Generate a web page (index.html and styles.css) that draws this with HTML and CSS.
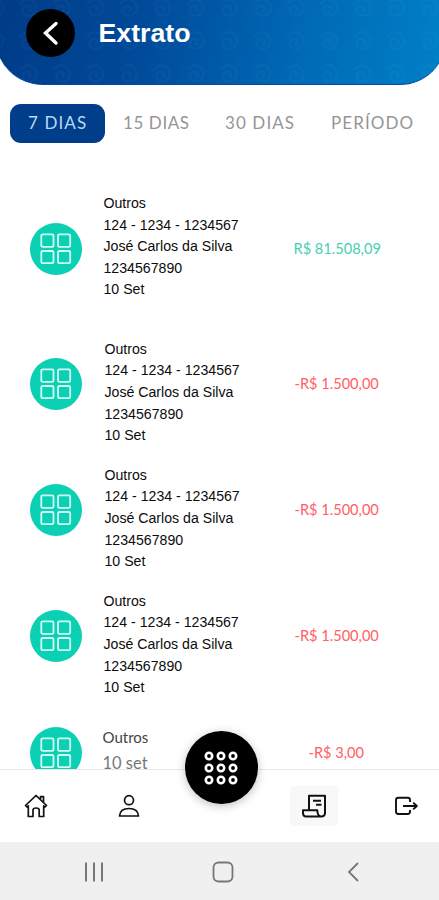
FILE: index.html
```
<!DOCTYPE html>
<html lang="pt-BR">
<head>
<meta charset="utf-8">
<title>Extrato</title>
<link rel="stylesheet" href="styles.css">
</head>
<body>
<svg class="defs" width="0" height="0" aria-hidden="true">
  <symbol id="grid" viewBox="0 0 32 32"><g fill="none" stroke="#d2fff8" stroke-width="1.8"><rect x="1.3" y="1.3" width="12.2" height="12.6" rx="1.5"/><rect x="18" y="1.3" width="12.2" height="12.6" rx="1.5"/><rect x="1.3" y="18" width="12.2" height="12.2" rx="1.5"/><rect x="18" y="18" width="12.2" height="12.2" rx="1.5"/></g></symbol>
</svg>
<div class="app">
  <header class="header">
    <svg class="pattern" width="439" height="85" aria-hidden="true">
      <defs><pattern id="swirl" width="33.4" height="33" patternUnits="userSpaceOnUse" x="14" y="-8"><path d="M6 12q8-9 15-1c5 8-3 15-9 12c-6-3-3-10 2-9c4 1 3 6 0 5" fill="none" stroke="#8ad0ff" stroke-width="2.4"/></pattern></defs>
      <rect width="439" height="85" fill="url(#swirl)" opacity=".04"/>
    </svg>
    <div class="back"><svg width="48" height="48" viewBox="0 0 48 48"><path d="M30 14.5L19.5 24L30 34" fill="none" stroke="#fff" stroke-width="3.4" stroke-linecap="round"/></svg></div>
    <h1>Extrato</h1>
  </header>
  <nav class="tabs">
    <span class="tab active">7 DIAS</span>
    <span class="tab t15">15 DIAS</span>
    <span class="tab t30">30 DIAS</span>
    <span class="tab per">PERÍODO</span>
  </nav>
  <main class="list">
    <div class="row first">
      <div class="badge"><svg width="32" height="32"><use href="#grid"/></svg></div>
      <div class="info">Outros<br>124 - 1234 - 1234567<br>José Carlos da Silva<br>1234567890<br>10 Set</div>
      <div class="amount credit">R$ 81.508,09</div>
    </div>
    <div class="row">
      <div class="badge"><svg width="32" height="32"><use href="#grid"/></svg></div>
      <div class="info inset">Outros<br>124 - 1234 - 1234567<br>José Carlos da Silva<br>1234567890<br>10 Set</div>
      <div class="amount">-R$ 1.500,00</div>
    </div>
    <div class="row">
      <div class="badge"><svg width="32" height="32"><use href="#grid"/></svg></div>
      <div class="info inset">Outros<br>124 - 1234 - 1234567<br>José Carlos da Silva<br>1234567890<br>10 Set</div>
      <div class="amount">-R$ 1.500,00</div>
    </div>
    <div class="row">
      <div class="badge"><svg width="32" height="32"><use href="#grid"/></svg></div>
      <div class="info">Outros<br>124 - 1234 - 1234567<br>José Carlos da Silva<br>1234567890<br>10 Set</div>
      <div class="amount">-R$ 1.500,00</div>
    </div>
    <div class="row last">
      <div class="badge"><svg width="32" height="32"><use href="#grid"/></svg></div>
      <div class="info brief"><div class="kind">Outros</div><div class="date">10 set</div></div>
      <div class="amount small">-R$ 3,00</div>
    </div>
  </main>
  <footer class="bar">
    <div class="item"><svg width="26" height="26" viewBox="0 0 26 26" fill="none" stroke="#111" stroke-width="1.7" stroke-linejoin="round"><path d="M2.5 12.5L13 2.5L23.5 12.5L22 14L20.7 12.8V23.5H16.2V17.2Q16.2 15 13.2 15Q10 15 10 17.2V23.5H5.3V12.8L4 14ZM17.5 6.2V3.6H20.5V9.4"/></svg></div>
    <div class="item"><svg width="26" height="26" viewBox="0 0 26 26" fill="none" stroke="#111" stroke-width="1.7"><circle cx="13" cy="7.2" r="4.5"/><path d="M3.5 23Q4 15.5 13 15.5T22.5 23Z" stroke-linejoin="round"/></svg></div>
    <div class="item"></div>
    <div class="item selected"><svg width="26" height="26" viewBox="0 0 26 26" fill="none" stroke="#111" stroke-width="2" stroke-linejoin="round"><path d="M8 16.8V2.8H24V20.3Q23.5 23.5 20.6 23.5H4.5Q2 23 2 20V17.3H16.3Q16.4 23.5 20.5 23.5M12 7.8H20M15 11.7H20.5"/></svg></div>
    <div class="item"><svg width="26" height="26" viewBox="0 0 26 26" fill="none" stroke="#111" stroke-width="1.9" stroke-linejoin="round"><path d="M17 9V7Q17 4.7 14.7 4.7H5.5Q3 4.7 3 7V18.5Q3 21 5.5 21H14.7Q17 21 17 18.5V17M10 13H23.5M20.2 9.6L23.8 13L20.2 16.4"/></svg></div>
    <div class="fab"><svg width="40" height="40" viewBox="0 0 40 40"><g fill="none" stroke="#fff" stroke-width="2.6"><circle cx="8" cy="8" r="3.2"/><circle cx="20" cy="8" r="3.2"/><circle cx="32" cy="8" r="3.2"/><circle cx="8" cy="20" r="3.2"/><circle cx="20" cy="20" r="3.2"/><circle cx="32" cy="20" r="3.2"/><circle cx="8" cy="32" r="3.2"/><circle cx="20" cy="32" r="3.2"/><circle cx="32" cy="32" r="3.2"/></g></svg></div>
  </footer>
  <div class="system">
    <svg width="20" height="22" viewBox="0 0 20 22"><path d="M2 1.5V20.5M10 1.5V20.5M18 1.5V20.5" stroke="#777" stroke-width="2"/></svg>
    <svg width="22" height="22" viewBox="0 0 22 22"><rect x="1.5" y="1.5" width="19" height="19" rx="5" fill="none" stroke="#777" stroke-width="1.8"/></svg>
    <svg width="14" height="22" viewBox="0 0 14 22"><path d="M12 2L3 11L12 20" fill="none" stroke="#777" stroke-width="1.8"/></svg>
  </div>
</div>
</body>
</html>
```
FILE: styles.css
```
* { box-sizing: border-box; }
body { margin: 0; background: #fff; }
.defs { position: absolute; }
.app { width: 439px; height: 900px; overflow: hidden; display: flex; flex-direction: column; font-family: "Liberation Sans", Arial, sans-serif; }
.header { position: relative; flex: none; width: 451px; height: 84.5px; margin-left: -5px; padding: 0 0 18px 31px; display: flex; align-items: center; overflow: hidden; border-radius: 0 0 46px 48px; border-bottom: 1px solid #0848a0; background: linear-gradient(100deg, #003b87 0%, #004a99 32%, #006bb7 70%, #0081c7 100%); }
.pattern { position: absolute; left: 5px; top: 0; }
.back { position: relative; width: 49px; height: 48px; border-radius: 50%; background: #000; }
.back svg { display: block; }
h1 { position: relative; margin: 1px 0 0 23.5px; font-size: 26.7px; line-height: 30px; color: #fff; }
.tabs { flex: none; display: flex; align-items: center; height: 39px; margin: 19px 0 0 10px; }
.tab { font-family: Lato, sans-serif; font-size: 17px; line-height: 38px; letter-spacing: 1.1px; color: #959595; white-space: nowrap; }
.active { width: 95px; height: 39px; padding-left: 18px; border-radius: 11px; background: #003d8a; color: #b8d9f4; }
.t15 { width: 102px; margin-left: 18px; letter-spacing: .6px; }
.t30 { width: 106px; }
.list { flex: none; height: 626.5px; padding-top: 33.5px; overflow: hidden; }
.row { height: 126px; display: grid; grid-template-columns: 103.5px 190px 1fr; align-items: center; }
.first { height: 145px; }
.last { height: 108px; }
.badge { width: 52px; height: 52px; margin-left: 29.5px; border-radius: 50%; background: #0bd0b3; display: flex; align-items: center; justify-content: center; }
.info { padding-top: 17.6px; font-size: 14.15px; line-height: 21.6px; color: #0c0c0c; white-space: nowrap; }
.first .info { padding: 0 0 3px; }
.inset { padding-left: 1px; }
.amount { padding-left: 1px; font-family: Lato, sans-serif; font-size: 14.6px; line-height: 20px; color: #ff6066; white-space: nowrap; }
.credit { padding-left: 0; color: #49cfb2; }
.small { padding-left: 15px; }
.brief { padding: 0; margin-left: -1px; font-family: Lato, sans-serif; }
.kind { font-size: 15px; line-height: 27px; margin-top: -6px; color: #444; }
.date { font-size: 16.5px; line-height: 25px; color: #777; }
.bar { position: relative; flex: none; height: 73px; border-top: 1.5px solid #e8e8e8; display: grid; grid-template-columns: 72px 113px 82px 94px 78px; align-items: center; background: #fff; }
.item { height: 40px; display: flex; align-items: center; justify-content: center; }
.selected { width: 48px; margin-left: 23px; border-radius: 3px; background: #f8f8f8; }
.item:nth-child(5) { padding-left: 12px; }
.fab { position: absolute; left: 184.5px; top: -39px; width: 73px; height: 73px; border-radius: 50%; background: #000; box-shadow: 0 2px 10px rgba(0,0,0,.25); display: flex; align-items: center; justify-content: center; }
.system { flex: 1; background: #f0f0f0; display: grid; grid-template-columns: 187px 72px 187px; align-items: center; justify-items: center; padding-top: 2px; }
```
